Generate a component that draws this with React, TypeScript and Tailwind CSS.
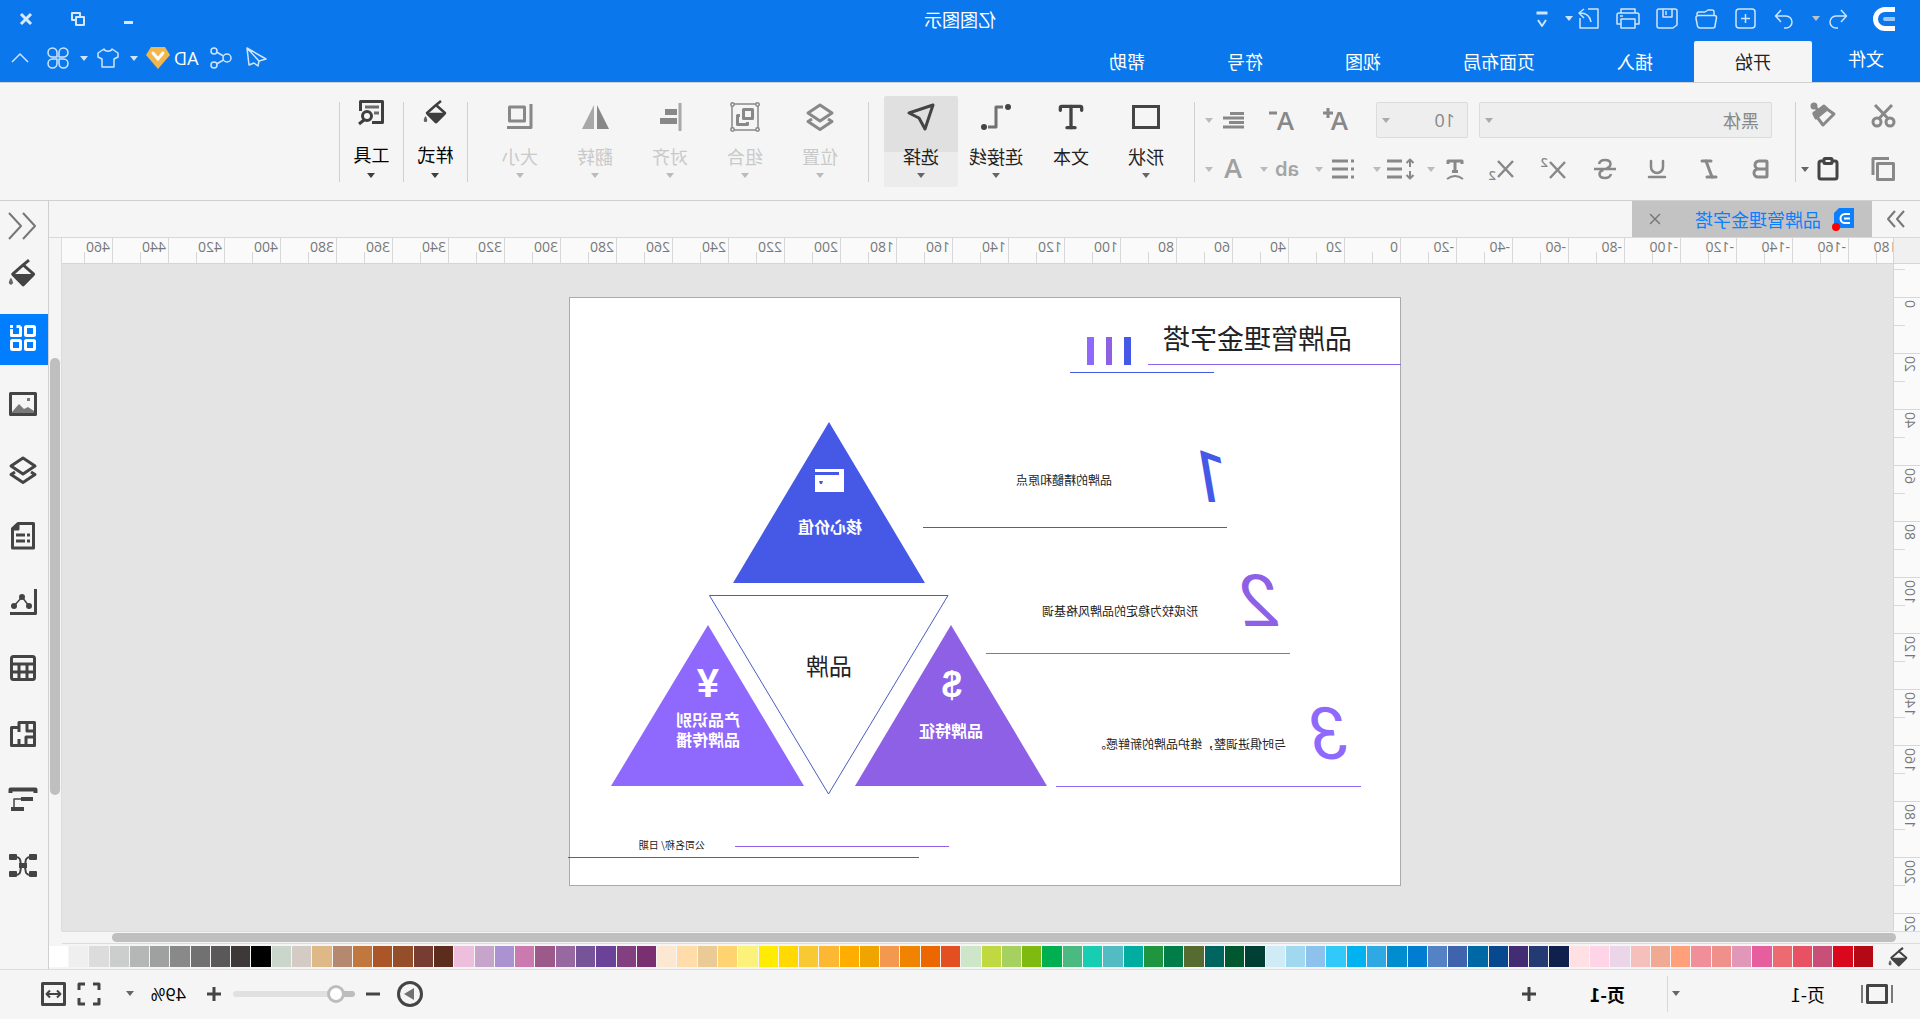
import { useState } from "react";
import type { ReactNode } from "react";
import { Bold, Italic, Underline, Type, X } from "lucide-react";

const palette = [
  "#b50815", "#d9081c", "#c84f78", "#e85162", "#eb6b70", "#e75e9e", "#e097b8", "#f0908a", "#f08f9a", "#ffa07a",
  "#f0aa94", "#f5bfbb", "#ead5e9", "#ffd4e6", "#ffe0e3", "#0f204d", "#243a72", "#422d75", "#08488e", "#0068a5",
  "#3f63ad", "#5582c4", "#007dd0", "#008dd0", "#2fa9e3", "#00b3f0", "#30c9fa", "#8cc2ec", "#a0d8ef", "#cfebf6",
  "#004034", "#005730", "#00645f", "#556b30", "#007d48", "#20953f", "#00ada0", "#52bcc2", "#18ceb2", "#4aba80",
  "#00b050", "#7fba10", "#a6d060", "#c1d941", "#cde6c8", "#e34f20", "#ec6700", "#f08300", "#f2994f", "#f0a400",
  "#ffae00", "#fdb833", "#f9c933", "#ffd900", "#ffec00", "#fbf27c", "#ffd470", "#eacb95", "#ffdcaa", "#fce7d0",
  "#7a3070", "#834080", "#6a4298", "#755598", "#9868a0", "#9c5a8a", "#cb7ab0", "#ab92d0", "#c7a5ca", "#ecc0dc",
  "#5c2c1c", "#783d32", "#944f2a", "#aa5628", "#c0783f", "#b58870", "#deb887", "#d5cbc5", "#cad5cb", "#000000",
  "#3e3838", "#5a5858", "#717171", "#898989", "#9fa0a0", "#b5b6b6", "#cccece", "#dcdcdc", "#efefef", "#ffffff",
];

const hMarks = Array.from({ length: 34 }, (_, i) => -180 + i * 20);
const vMarks = Array.from({ length: 13 }, (_, i) => -20 + i * 20);

type IconProps = { w?: number; h?: number; sw?: number; className?: string; children: ReactNode };

function Icon({ w = 24, h = 24, sw = 2, className = "", children }: IconProps) {
  return (
    <svg
      width={w}
      height={h}
      viewBox={`0 0 ${w} ${h}`}
      fill="none"
      stroke="currentColor"
      strokeWidth={sw}
      strokeLinejoin="round"
      className={`shrink-0 overflow-visible ${className}`}
      aria-hidden="true"
    >
      {children}
    </svg>
  );
}

function Caret({ className = "text-[#666]" }: { className?: string }) {
  return (
    <Icon w={8} h={5} className={className}>
      <path d="M0 0h8L4 5z" fill="currentColor" stroke="none" />
    </Icon>
  );
}

function Divider() {
  return <div className="mt-[19px] h-20 w-px shrink-0 bg-[#cfcfcf]" />;
}

function LayersIcon() {
  return (
    <Icon w={28} h={28} sw={3}>
      <path d="M14 2l12 8-12 8-12-8z" />
      <path d="M6 16l-4 2.500 12 8 12-8-4-2.500" />
    </Icon>
  );
}

function BucketIcon({ size = 24 }: { size?: number }) {
  return (
    <svg width={size} height={size} viewBox="0 0 24 24" fill="none" stroke="currentColor" strokeWidth="2.5" strokeLinejoin="round" aria-hidden="true">
      <path d="M6 1l5 4 9 8-9 9-9-9 9-8" />
      <path d="M3 14h16l-8 8z" fill="currentColor" />
      <path d="M21.500 16c3 4.500 1.500 6 0 6s-3-1.500 0-6z" fill="currentColor" stroke="none" opacity=".8" />
    </svg>
  );
}

function QuickBar() {
  return (
    <div className="flex flex-1 items-center text-[#cfe4fb]">
      <svg width="22" height="24" viewBox="0 0 22 24" className="ml-[25px] text-white" fill="none" aria-label="亿图图示">
        <path d="M0 2.500h10a9.500 9.500 0 0 1 0 19H0" stroke="currentColor" strokeWidth="5" />
        <path d="M1 12h9" stroke="#9cc8f8" strokeWidth="4" strokeLinecap="round" />
      </svg>
      <button aria-label="撤销" className="ml-[23px]">
        <Icon sw={1.5}><path d="M9 3L3.500 9 9 15M3.500 9H14a6 6 0 0 1 0 12h-2" /></Icon>
      </button>
      <button aria-label="撤销列表" className="ml-1.5 text-[#b9c4cc]"><Caret className="" /></button>
      <button aria-label="重做" className="ml-4">
        <Icon sw={1.5}><path d="M15 3l5.500 6-5.500 6M20.500 9H10a6 6 0 0 0 0 12h2" /></Icon>
      </button>
      <div className="ml-[15px] flex items-center gap-[15px]">
        <button aria-label="新建">
          <Icon sw={1.5}><rect x="2" y="2" width="19" height="19" rx="3" /><path d="M11.500 7v9M7 11.500h9" /></Icon>
        </button>
        <button aria-label="打开">
          <Icon sw={1.5}>
            <path d="M4 8V5q0-2 2-2h4l3 2h6q2 0 2 2v1" />
            <path d="M3.500 8.500h16q3 0 2.500 3L20.500 19q-.5 2-2.500 2H5q-2 0-2-2l-1.500-8.500q0-2 2-2z" />
          </Icon>
        </button>
        <button aria-label="保存">
          <Icon sw={1.5}><path d="M2 4q0-2 2-2h16q2 0 2 2v15q0 2-2 2H6l-4-3z" /><path d="M7 2v8h9V2M13 4v4" /></Icon>
        </button>
        <button aria-label="打印">
          <Icon sw={1.5}><path d="M5 6V2h14v4M5 17H1V8q0-2 2-2h18q2 0 2 2v9h-4M5 12h14v9H5zM17 9h3" /></Icon>
        </button>
        <button aria-label="导出">
          <Icon sw={1.5}><path d="M13 2H3v19h18V11M10 15c1-6 4-9 11-9M17 2l5 4-5 5" /></Icon>
        </button>
      </div>
      <button aria-label="导出选项" className="ml-1"><Caret className="" /></button>
      <button aria-label="自定义快速访问" className="ml-[11px]">
        <Icon sw={2}><path d="M6.500 6h11" strokeWidth="3" /><path d="M8 13l4 6 4-6" /></Icon>
      </button>
    </div>
  );
}

function WindowButtons() {
  return (
    <div className="flex flex-1 justify-end text-[#d5e8fc]">
      <button aria-label="最小化" className="flex w-[52px] justify-center">
        <Icon w={12} h={12} sw={3}><path d="M3 9.500h9" /></Icon>
      </button>
      <button aria-label="还原" className="flex w-[52px] justify-center">
        <Icon w={12} h={12} sw={2}><path d="M0 4h8v8H0zM4 3V0h8v7H9" /></Icon>
      </button>
      <button aria-label="关闭" className="flex w-[52px] justify-center">
        <Icon w={12} h={12} sw={3}><path d="M1 1l10 10M11 1L1 11" /></Icon>
      </button>
    </div>
  );
}

const menus = ["开始", "插入", "页面布局", "视图", "符号", "帮助"];

function Header() {
  const [active, setActive] = useState("开始");
  return (
    <header className="border-b border-[#d0d0d0] bg-[#0a78ec] text-lg text-white">
      <div className="flex h-[41px] items-center pb-1">
        <QuickBar />
        <h1 className="text-lg font-normal">亿图图示</h1>
        <WindowButtons />
      </div>
      <div className="flex h-[41px]">
        <button className="w-[108px] pb-2">文件</button>
        {menus.map((m) => (
          <button
            key={m}
            onClick={() => setActive(m)}
            className={m === active ? "rounded-t-xs bg-[#f5f5f5] px-[41px] pb-px text-[#222]" : "px-[41px] pb-px"}
          >
            {m}
          </button>
        ))}
        <div className="ml-auto flex items-center gap-[10px] pr-2 pb-[7px] text-[#cfe4fb]">
          <button aria-label="发送" className="mr-px">
            <Icon sw={1.5}><path d="M21 2L2 13l7 2 1 5 4-3 5 2zM21 2L9 15" /></Icon>
          </button>
          <button aria-label="分享" className="mr-px">
            <Icon sw={1.5}>
              <circle cx="6" cy="12" r="4" /><circle cx="19" cy="5" r="3" /><circle cx="19" cy="19" r="3" />
              <path d="M9.500 10l7-4M9.500 14l7 4" />
            </Icon>
          </button>
          <button className="flex items-center gap-1">
            <span className="font-['Open_Sans',sans-serif] text-lg leading-6 text-white">AD</span>
            <svg width="24" height="22" viewBox="0 0 24 22" aria-label="会员">
              <path d="M5 0h14l5 8-12 14L0 8z" fill="#f3b64b" />
              <path d="M7 6l5 6 5-6" stroke="#fff" strokeWidth="3" fill="none" strokeLinecap="round" />
            </svg>
            <Caret className="ml-1" />
          </button>
          <button aria-label="皮肤" className="flex items-center gap-2">
            <Icon sw={1.5}><path d="M8 3L2 7v4l4 2v8h12v-8l4-2V7l-6-4c-1 3-7 3-8 0z" /></Icon>
            <Caret className="" />
          </button>
          <button aria-label="应用">
            <Icon sw={1.5}>
              <path d="M11 11H6.500A4.500 4.500 0 1 1 11 6.500zM13 11V6.500A4.500 4.500 0 1 1 17.500 11zM11 13v4.500A4.500 4.500 0 1 1 6.500 13zM13 13h4.500A4.500 4.500 0 1 1 13 17.500z" />
            </Icon>
          </button>
          <button aria-label="收起功能区" className="ml-1">
            <Icon sw={1.5}><path d="M4 16l8-8 8 8" /></Icon>
          </button>
        </div>
      </div>
    </header>
  );
}

function ToolButton({ label, icon, tone = "normal", caret = true }: { label: string; icon: ReactNode; tone?: string; caret?: boolean }) {
  const tones: Record<string, string> = {
    normal: "text-[#444]",
    active: "rounded-xs bg-[linear-gradient(#e0e0e0_56px,#ececec_56px)] text-[#444]",
    disabled: "text-[#888]",
  };
  return (
    <button disabled={tone === "disabled"} className={`flex h-[91px] w-[74px] flex-col items-center ${tones[tone]}`}>
      <span className="flex h-[42px] items-center">{icon}</span>
      <span className={`mt-2 text-lg leading-5 ${tone === "disabled" ? "text-[#c9c9c9]" : "text-[#222]"}`}>{label}</span>
      {caret && <Caret className={`mt-[7px] ${tone === "disabled" ? "text-[#bbb]" : "text-[#666]"}`} />}
    </button>
  );
}

function NarrowButton({ label, icon }: { label: string; icon: ReactNode }) {
  return (
    <button className="mt-[13px] flex h-[91px] w-[63px] flex-col items-center text-[#3f3f3f]">
      <span className="flex h-8 items-center">{icon}</span>
      <span className="mt-4 text-lg leading-5 text-black">{label}</span>
      <Caret className="mt-[9px]" />
    </button>
  );
}

function Toolbar() {
  return (
    <div className="flex h-[118px] items-start overflow-hidden border-b border-[#d0d0d0]">
      <div className="flex w-[124px] shrink-0 flex-col gap-7 pt-[19px] pl-6 text-[#888]">
        <div className="flex h-[26px] items-center gap-[33px]">
          <button aria-label="剪切">
            <Icon w={26} h={26} sw={3}>
              <circle cx="6" cy="20" r="4" /><circle cx="19" cy="20" r="4" />
              <path d="M8 16.500L21 3M17 16.500L4 3" />
            </Icon>
          </button>
          <button aria-label="格式刷">
            <Icon w={26} h={26} sw={3}>
              <circle cx="23" cy="4" r="2" fill="currentColor" />
              <path d="M13 5L3 12l11 11 9-12z" /><path d="M13 4l10 8-2 4-11-9zM22 5l-5 5" fill="currentColor" />
            </Icon>
          </button>
        </div>
        <div className="flex h-[26px] items-center">
          <button aria-label="复制">
            <Icon w={26} h={26} sw={3}><path d="M2.500 7.500h16v16h-16zM7 2.500h16V19" /></Icon>
          </button>
          <button aria-label="粘贴" className="ml-[29px] flex items-center gap-1.5 text-[#444]">
            <Icon w={26} h={26} sw={3}>
              <rect x="4" y="5" width="18" height="18" rx="2" /><rect x="9" y="2.500" width="8" height="5" rx="1" fill="#f5f5f5" />
            </Icon>
            <Caret />
          </button>
        </div>
      </div>
      <Divider />
      <div className="flex w-[600px] shrink-0 flex-col gap-[18px] pt-[19px] pl-[22px] text-[#888]">
        <div className="flex h-9 items-center">
          <label className="ml-px flex h-9 w-[293px] items-center rounded-xs border border-[#dcdcdc] bg-[#eee] pr-[5px] pl-3">
            <select aria-label="字体" className="min-w-0 flex-1 appearance-none text-lg outline-none">
              <option>黑体</option>
            </select>
            <Caret className="text-[#aaa]" />
          </label>
          <label className="ml-[11px] flex h-9 w-[92px] items-center rounded-xs border border-[#dcdcdc] bg-[#eee] pr-[5px] pl-3">
            <select aria-label="字号" className="min-w-0 flex-1 appearance-none font-['Open_Sans',sans-serif] text-lg outline-none">
              <option>10</option>
            </select>
            <Caret className="text-[#aaa]" />
          </label>
          <button aria-label="增大字号" className="ml-[27px]">
            <Icon w={26} h={26} sw={3}>
              <path d="M16 6h10M21 1v10" />
              <text x="1" y="23" fontSize="26" fontWeight="600" fill="currentColor" stroke="none" fontFamily="Open Sans">A</text>
            </Icon>
          </button>
          <button aria-label="减小字号" className="ml-7">
            <Icon w={26} h={26} sw={3}>
              <path d="M18 6h8" />
              <text x="1" y="23" fontSize="26" fontWeight="600" fill="currentColor" stroke="none" fontFamily="Open Sans">A</text>
            </Icon>
          </button>
          <button aria-label="对齐方式" className="ml-6 flex items-center gap-2">
            <Icon sw={3}><path d="M1 5.500h14M1 10h21M1 14.500h15M1 19h21" /></Icon>
            <Caret className="text-[#bbb]" />
          </button>
        </div>
        <div className="flex h-[26px] items-center">
          <div className="flex gap-7">
            <button aria-label="加粗"><Bold size={24} strokeWidth={3} /></button>
            <button aria-label="斜体"><Italic size={24} strokeWidth={3} /></button>
            <button aria-label="下划线"><Underline size={24} strokeWidth={2.5} /></button>
            <button aria-label="删除线">
              <Icon sw={2.5}><path d="M1 12h22M18 7q-1-4-6-4-5.500 0-5.500 4 0 3 4 4.500M6 17q1 4 6 4 5.500 0 5.500-4 0-3-4-4" /></Icon>
            </button>
            <button aria-label="上标">
              <Icon sw={2.5}>
                <path d="M0 5l15 16M15 5L0 21" />
                <text x="17" y="10" fontSize="13" fontWeight="600" fill="currentColor" stroke="none" fontFamily="Open Sans">2</text>
              </Icon>
            </button>
            <button aria-label="下标">
              <Icon sw={2.5}>
                <path d="M0 4l15 16M15 4L0 20" />
                <text x="17" y="23" fontSize="13" fontWeight="600" fill="currentColor" stroke="none" fontFamily="Open Sans">2</text>
              </Icon>
            </button>
          </div>
          <button aria-label="文字弯曲" className="ml-[22px] flex w-[52px] items-center gap-2">
            <Icon sw={3}><path d="M5 7V4h14v3M12 4v11M9 14.500h6" /><path d="M4 22q8-6 16 0" strokeWidth="2" /></Icon>
            <Caret className="text-[#bbb]" />
          </button>
          <button aria-label="行距" className="flex w-[60px] items-center gap-1.5">
            <Icon w={28} sw={3}>
              <path d="M13 4h15M13 12h15M13 20h15" />
              <path d="M5 2v8M5 14v8M1.500 6L5 2.500 8.500 6M1.500 18L5 21.500 8.500 18" strokeWidth="2" />
            </Icon>
            <Caret className="text-[#bbb]" />
          </button>
          <button aria-label="项目符号" className="flex w-[56px] items-center gap-2">
            <Icon sw={3}><path d="M7 4h16M7 12h16M7 20h16M1 4h3M1 12h3M1 20h3" /></Icon>
            <Caret className="text-[#bbb]" />
          </button>
          <button className="flex w-[54px] items-center gap-[7px] text-[#a5a5a5]">
            <span className="w-6 font-['Inter',sans-serif] text-xl leading-6 font-semibold">ab</span>
            <Caret className="text-[#bbb]" />
          </button>
          <button aria-label="字体颜色" className="flex items-center gap-2 text-[#a0a0a0]">
            <Icon sw={1}>
              <text x="3" y="21" fontSize="27" fontWeight="600" fill="currentColor" stroke="none" fontFamily="Open Sans">A</text>
            </Icon>
            <Caret className="text-[#bbb]" />
          </button>
        </div>
      </div>
      <Divider />
      <div className="mt-[13px] flex w-[325px] shrink-0 gap-px pl-[11px]">
        <ToolButton label="形状" icon={<Icon w={28} h={24} sw={3}><path d="M1.500 1.500h25v21h-25z" strokeLinejoin="miter" /></Icon>} />
        <ToolButton label="文本" caret={false} icon={<Type size={32} strokeWidth={2.5} />} />
        <ToolButton
          label="连接线"
          icon={
            <Icon w={30} h={26} sw={3}>
              <path d="M8 3h7v20h8" opacity=".75" />
              <circle cx="3" cy="3" r="3" fill="currentColor" stroke="none" /><circle cx="27" cy="23" r="3" fill="currentColor" stroke="none" />
            </Icon>
          }
        />
        <ToolButton label="选择" tone="active" icon={<Icon w={28} h={28} sw={3}><path d="M2 2l24 8-10 5-6 11z" /></Icon>} />
      </div>
      <Divider />
      <div className="mt-[13px] flex w-[400px] shrink-0 gap-px pl-[11px]">
        <ToolButton tone="disabled" label="位置" icon={<LayersIcon />} />
        <ToolButton
          tone="disabled"
          label="组合"
          icon={
            <Icon w={30} h={30} sw={3}>
              <path d="M2 2h26v26H2z" strokeWidth="1.500" />
              <g strokeWidth="1.500" fill="#f5f5f5">
                <circle cx="2.500" cy="2.500" r="1.700" /><circle cx="27.500" cy="2.500" r="1.700" />
                <circle cx="2.500" cy="27.500" r="1.700" /><circle cx="27.500" cy="27.500" r="1.700" />
              </g>
              <path d="M7.500 7.500h9v9h-9zM20 13.500h2.500v9h-10V20" />
            </Icon>
          }
        />
        <ToolButton
          tone="disabled"
          label="对齐"
          icon={
            <Icon w={24} h={28}>
              <path d="M2 0v28" strokeWidth="3" opacity=".7" />
              <path d="M5 6h12v6H5zM5 15h17v6H5z" fill="currentColor" stroke="none" />
            </Icon>
          }
        />
        <ToolButton
          tone="disabled"
          label="翻转"
          icon={
            <Icon w={28} h={24}>
              <path d="M12 0v24H0z" fill="currentColor" stroke="none" /><path d="M15 0v24h12z" fill="currentColor" stroke="none" opacity=".7" />
            </Icon>
          }
        />
        <ToolButton tone="disabled" label="大小" icon={<Icon w={27} h={26} sw={3}><path d="M8.500 3h15v14h-15zM2 0v23.500h24" /></Icon>} />
      </div>
      <Divider />
      <NarrowButton label="样式" icon={<BucketIcon />} />
      <Divider />
      <NarrowButton
        label="工具"
        icon={
          <Icon w={28} h={26} sw={3}>
            <path d="M13 23.500H2.500v-21h22V12" /><circle cx="18" cy="17" r="4.500" /><path d="M21 21l5 4" />
            <path d="M6 8h14M6 14h5" opacity=".75" />
          </Icon>
        }
      />
      <Divider />
    </div>
  );
}

function DocTabs() {
  return (
    <div className="flex h-[37px] items-stretch border-b border-[#d8d8d8]">
      <button aria-label="展开左侧面板" className="flex w-12 items-center justify-center text-[#777]">
        <Icon w={20} h={20}><path d="M2 2l7 8-7 8M11 2l7 8-7 8" /></Icon>
      </button>
      <div className="flex w-[240px] items-center bg-[#c3c3c3] pr-[14px] pl-[17px]">
        <svg width="23" height="24" viewBox="0 0 23 24" aria-hidden="true">
          <path d="M1 1h15l5 5v15H1z" fill="#0a80ff" />
          <path d="M5 7h5a4.500 4.500 0 0 1 0 9H5M5 11.500h6" stroke="#fff" strokeWidth="2" fill="none" />
          <circle cx="19" cy="20" r="4" fill="#f00" />
        </svg>
        <a href="#doc" className="ml-[11px] text-lg text-[#0a80ff]">品牌管理金字塔</a>
        <button aria-label="关闭文档" className="ml-auto text-[#777]"><X size={18} /></button>
      </div>
    </div>
  );
}

function HRuler() {
  return (
    <div className="h-[26px] overflow-hidden border-b border-[#d5d5d5] bg-[#fafafa]">
      <div className="-ml-[12px] flex">
        {hMarks.map((m) => (
          <div key={m} className="flex h-[25px] w-14 shrink-0 items-end border-l border-[#d8d8d8]">
            <span className="h-[25px] w-[27px] pl-0.5 font-['Open_Sans',sans-serif] text-sm leading-[18px] whitespace-nowrap text-[#777]">{m}</span>
            <span className="h-[11px] w-px bg-[#d8d8d8]" />
          </div>
        ))}
      </div>
    </div>
  );
}

function VRuler() {
  return (
    <div className="flex w-[27px] shrink-0 flex-col overflow-hidden border-r border-[#d5d5d5] bg-[#fafafa]">
      <div className="h-[26px] shrink-0 border-b border-[#d5d5d5] bg-[#f0f0f0]" />
      <div className="h-0 flex-1 overflow-hidden">
        <div className="-mt-[23px] flex flex-col">
          {vMarks.map((m) => (
            <div key={m} className="flex h-14 shrink-0 flex-col items-end border-t border-[#d8d8d8]">
              <div className="flex h-[27px] w-full justify-start pt-0.5 pl-px">
                <span className="rotate-180 self-start font-['Open_Sans',sans-serif] text-sm leading-[18px] text-[#777] [writing-mode:vertical-rl]">{m}</span>
              </div>
              <span className="h-px w-[11px] bg-[#d8d8d8]" />
            </div>
          ))}
        </div>
      </div>
    </div>
  );
}

// Drawing page: shapes sit at their own coordinates on the sheet
function Sheet() {
  return (
    <div className="relative mt-[33px] ml-[492px] h-[589px] w-[832px] shrink-0 border border-[#aaa] bg-white text-[#222]">
      <svg width="834" height="589" viewBox="0 0 834 589" className="absolute -top-px left-0 overflow-visible" aria-hidden="true">
        <path d="M269 40h7v28h-7zM571 125l96 161H475z" fill="#4559e6" />
        <path d="M288 40h6v28h-6zM449 328l96 161H353z" fill="#8d60e6" />
        <path d="M306 40h7v28h-7zM692 328l97 161H596z" fill="#8f68fd" />
        <path d="M452 298.500h238.500L571.500 497z" fill="none" stroke="#4a5cc0" />
        <g fill="#4559e6">
          <rect x="186" y="75" width="144" height="1" /><rect x="173" y="230" width="304" height="1" /><rect x="481" y="560" width="351" height="1" />
        </g>
        <g fill="#8d60e6">
          <rect x="-1" y="67" width="253" height="1" /><rect x="110" y="356" width="304" height="1" /><rect x="451" y="549" width="214" height="1" />
        </g>
        <rect x="39" y="489" width="305" height="1" fill="#8f68fd" />
        <path d="M556 172h29v23h-29z" fill="#fff" />
        <path d="M561 175h24v3h-24z" fill="#4559e6" />
        <path d="M577 184h4l-1 3h-2z" fill="#4559e6" />
      </svg>
      <h2 className="absolute top-5 left-[48px] text-[27px] leading-10">品牌管理金字塔</h2>
      <span className="absolute top-[140px] left-[170px] font-['Roboto',sans-serif] text-[72px] leading-[80px] text-[#4559e6] italic">1</span>
      <span className="absolute top-[264px] left-[121px] font-['Roboto',sans-serif] text-[72px] leading-[80px] text-[#8d60e6] italic">2</span>
      <span className="absolute top-[397px] left-[52px] font-['Roboto',sans-serif] text-[72px] leading-[80px] text-[#8f68fd] italic">3</span>
      <p className="absolute top-[172px] left-[288px] text-xs leading-5">品牌的精髓和原点</p>
      <p className="absolute top-[303px] left-[202px] text-xs leading-5">形成较为稳定的品牌风格基调</p>
      <p className="absolute top-[436px] left-[114px] text-xs leading-5">与时俱进调整，维护品牌的新鲜感。</p>
      <p className="absolute top-[218px] left-[538px] text-base leading-5 font-bold text-white">核心价值</p>
      <p className="absolute top-[357px] left-[548px] text-[23px] leading-5">品牌</p>
      <p className="absolute top-[367px] left-[438px] font-['Liberation_Sans',sans-serif] text-4xl leading-10 font-bold text-white">$</p>
      <p className="absolute top-[365px] left-[681px] font-['Liberation_Sans',sans-serif] text-[40px] leading-10 font-bold text-white">¥</p>
      <p className="absolute top-[422px] left-[417px] text-base leading-5 font-bold text-white">品牌特征</p>
      <p className="absolute top-[411px] left-[660px] text-base leading-5 font-bold text-white">产品识别<br />品牌传播</p>
      <p className="absolute top-[537px] left-[695px] text-[10px] leading-5">公司名称/ 日期</p>
    </div>
  );
}

const panels = [
  { name: "符号库", icon: (
    <Icon w={28} h={28} sw={3}>
      <rect x="2.500" y="2.500" width="9" height="9" rx="1" /><path d="M16.500 2.500h4M25.500 5v6.500h-9v-9M24 2.500h3" />
      <rect x="2.500" y="16.500" width="9" height="9" rx="1" /><rect x="16.500" y="16.500" width="9" height="9" rx="1" />
    </Icon>
  ) },
  { name: "图片", icon: (
    <Icon w={28} h={24} sw={3}>
      <path d="M1.500 1.500h25v21h-25z" /><path d="M3 21v-2l6-4 4 2 5-5 7 8v1z" fill="currentColor" stroke="none" opacity=".7" />
      <path d="M7 6h3v3H7z" fill="currentColor" stroke="none" opacity=".7" />
    </Icon>
  ) },
  { name: "图层", icon: <LayersIcon /> },
  { name: "备注", icon: (
    <Icon w={24} h={28} sw={3}><path d="M1.500 1.500H17l5.500 5v19.500h-21z" /><path d="M17 2v5h5z" /><path d="M5 13h3M10 13h9M5 19h3M10 19h9" /></Icon>
  ) },
  { name: "图表", icon: (
    <Icon w={28} h={28} sw={3}>
      <path d="M1.500 1v24.500H27" /><path d="M8 18l7-9 8 9" strokeWidth="1.500" />
      <g fill="currentColor" stroke="none"><circle cx="8" cy="18" r="3" /><circle cx="15" cy="9" r="3" /><circle cx="23" cy="18" r="3" /></g>
    </Icon>
  ) },
  { name: "表格", icon: <Icon w={26} h={26} sw={3}><rect x="1.500" y="1.500" width="23" height="23" rx="2" /><path d="M1 9h24M1 17h24M9 9v16M17 9v16" /></Icon> },
  { name: "平面图", icon: <Icon w={26} h={26} sw={3}><path d="M1.500 1.500H17v5h7.500v18h-23zM9 2v8H2M2 16h8v8M17 11V6M17 24v-6" /></Icon> },
  { name: "甘特图", icon: (
    <Icon w={28} h={26}>
      <path d="M1.500 6V2.500h25V6" strokeWidth="4" /><path d="M9 12h14v8" strokeWidth="1.500" />
      <path d="M4 10h12v4H4zM13 20h13v4H13z" fill="currentColor" stroke="none" />
    </Icon>
  ) },
  { name: "思维导图", icon: (
    <Icon w={28} h={24}>
      <path d="M6 3c9 0 3 9 8 9s-1-9 8-9M6 21c9 0 3-9 8-9s-1 9 8 9" />
      <g fill="currentColor" stroke="none">
        <rect x="0" y="0" width="8" height="6" rx="1" /><rect x="20" y="0" width="8" height="6" rx="1" />
        <rect x="0" y="17" width="8" height="6" rx="1" /><rect x="20" y="17" width="8" height="6" rx="1" /><rect x="10" y="9" width="8" height="5" />
      </g>
    </Icon>
  ) },
];

function SidePanel() {
  const [current, setCurrent] = useState("符号库");
  return (
    <aside className="flex w-[49px] shrink-0 flex-col border-l border-[#cfcfcf] text-[#444]">
      <button aria-label="展开右侧面板" className="flex h-[49px] items-center justify-center pl-1 text-[#777]">
        <Icon w={28} h={28}><path d="M13 1L1 14l12 13M27 1L15 14l12 13" /></Icon>
      </button>
      <button aria-label="填充" className="mb-[10px] flex h-[46px] items-center justify-center pl-[3px]"><BucketIcon size={28} /></button>
      {panels.map((p) => (
        <div key={p.name} className="flex h-[66px] items-center">
          <button
            aria-label={p.name}
            onClick={() => setCurrent(p.name)}
            className={`flex h-[51px] w-full items-center justify-center pb-0.5 pl-0.5 ${p.name === current ? "bg-[#007eff] text-white" : ""}`}
          >
            {p.icon}
          </button>
        </div>
      ))}
    </aside>
  );
}

function StatusBar() {
  const [zoom, setZoom] = useState(10);
  return (
    <footer className="flex h-[50px] items-center border-t border-[#dcdcdc] pr-[41px] pb-0.5 pl-[26px] text-[#444]">
      <button aria-label="页面视图">
        <Icon w={34} h={20} sw={3}><path d="M7.500 1.500h19v17h-19z" /><path d="M2 1v18M32 1v18" strokeWidth="2" opacity=".7" /></Icon>
      </button>
      <label className="ml-[35px] flex w-[153px] items-center text-black">
        <select aria-label="页面" className="min-w-0 flex-1 appearance-none text-lg outline-none">
          <option>页-1</option>
        </select>
        <Caret />
      </label>
      <div className="ml-1 h-9 w-px bg-[#d8d8d8]" />
      <button className="ml-[42px] text-lg font-bold text-black">页-1</button>
      <button aria-label="添加页面" className="ml-[53px]"><Icon w={16} h={16} sw={3}><path d="M8 1v14M1 8h14" /></Icon></button>
      <div className="ml-auto flex items-center">
        <button aria-label="演示">
          <Icon w={26} h={26} sw={3}>
            <circle cx="13" cy="13" r="11.500" /><path d="M9 7l10 6-10 6z" fill="currentColor" stroke="none" opacity=".75" />
          </Icon>
        </button>
        <button aria-label="缩小" className="ml-4"><Icon w={16} h={16} sw={3}><path d="M1 8h14" /></Icon></button>
        <input
          type="range"
          aria-label="缩放"
          value={zoom}
          onChange={(e) => setZoom(Number(e.target.value))}
          className="ml-[10px] h-1.5 w-[122px] appearance-none rounded-full bg-[linear-gradient(to_right,#bdbdbd_20px,#e0e0e0_20px)] [&::-webkit-slider-thumb]:size-[18px] [&::-webkit-slider-thumb]:appearance-none [&::-webkit-slider-thumb]:rounded-full [&::-webkit-slider-thumb]:border-3 [&::-webkit-slider-thumb]:border-[#bdbdbd] [&::-webkit-slider-thumb]:bg-white"
        />
        <button aria-label="放大" className="ml-[11px]"><Icon w={16} h={16} sw={3}><path d="M8 1v14M1 8h14" /></Icon></button>
        <button className="ml-5 flex w-[60px] items-center justify-between font-['Open_Sans',sans-serif] text-lg text-black">
          <span>49%</span>
          <Caret />
        </button>
        <button aria-label="全屏" className="ml-[25px]">
          <Icon w={24} h={24} sw={3}><path d="M2 8V2h6M16 2h6v6M22 16v6h-6M8 22H2v-6" /></Icon>
        </button>
        <button aria-label="适应宽度" className="ml-[11px]">
          <Icon w={25} h={24} sw={3}><path d="M1.500 1.500h22v21h-22z" /><path d="M6 12h13M9 8.500L5.500 12 9 15.500M16 8.500l3.500 3.500-3.500 3.500" strokeWidth="2" /></Icon>
        </button>
      </div>
    </footer>
  );
}

export default function App() {
  return (
    <div className="flex h-screen -scale-x-100 flex-col overflow-hidden bg-[#f5f5f5] font-['Noto_Sans_CJK_SC',sans-serif]">
      <Header />
      <Toolbar />
      <div className="flex min-h-0 flex-1">
        <main className="flex min-w-0 flex-1 flex-col">
          <DocTabs />
          <div className="flex min-h-0 flex-1">
            <VRuler />
            <div className="flex min-w-0 flex-1 flex-col">
              <HRuler />
              <div className="min-h-0 flex-1 overflow-hidden bg-[#e4e4e4]">
                <Sheet />
              </div>
            </div>
            <div className="w-[13px] shrink-0 border-l border-[#dcdcdc] px-px pt-[120px] pb-[136px]">
              <div className="h-full rounded-full bg-[#bfbfbf]" />
            </div>
          </div>
          <div className="mr-[13px] border-y border-[#dcdcdc] py-px pr-[50px] pl-6">
            <div className="h-[9px] rounded-full bg-[#bfbfbf]" />
          </div>
          <div className="flex h-[25px] items-center pl-3 text-[#444]">
            <BucketIcon size={20} />
            <div className="ml-[15px] flex h-[21px] flex-1 gap-px">
              {palette.map((c) => (
                <button key={c} aria-label={c} className="flex-1" style={{ backgroundColor: c }} />
              ))}
            </div>
          </div>
        </main>
        <SidePanel />
      </div>
      <StatusBar />
    </div>
  );
}
